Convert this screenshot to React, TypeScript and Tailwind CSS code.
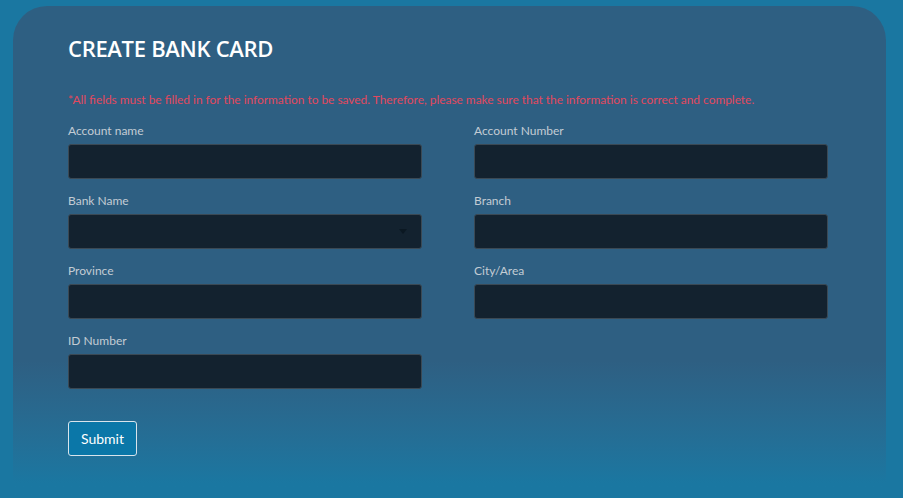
import React from "react";

type Field = { label: string; select?: boolean };

const rows: Field[][] = [
  [{ label: "Account name" }, { label: "Account Number" }],
  [{ label: "Bank Name", select: true }, { label: "Branch" }],
  [{ label: "Province" }, { label: "City/Area" }],
  [{ label: "ID Number" }],
];

function FormField({ label, select }: Field) {
  return (
    <label className="flex flex-col">
      <span className="text-[12px] leading-[15px] text-[#c3ccd4]">{label}</span>
      {select ? (
        <div className="relative mt-[6px]">
          <select className="h-[35px] w-full appearance-none rounded-[3px] border border-[#3b4954] bg-[#13222f] px-3 text-[13px] text-white outline-none">
            <option value=""></option>
          </select>
          <span className="pointer-events-none absolute right-[15px] top-[15px] h-0 w-0 border-x-[4px] border-t-[5px] border-x-transparent border-t-[#0b1822]" />
        </div>
      ) : (
        <input
          type="text"
          className="mt-[6px] h-[35px] w-full rounded-[3px] border border-[#3b4954] bg-[#13222f] px-3 text-[13px] text-white outline-none"
        />
      )}
    </label>
  );
}

export default function App() {
  return (
    <div className="min-h-screen bg-[#1a77a1] pl-[13px] pr-[17px] pt-[6px] font-['Open_Sans','Liberation_Sans',sans-serif]">
      <div className="min-h-[492px] rounded-t-[34px] bg-linear-to-b from-[#2e5f82] via-[#2e5f82] via-72% to-[#1a77a1] to-97% pl-[55px] pr-[58px] pt-[28px] pb-[36px]">
        <h1 className="text-[22px] font-semibold leading-[28px] tracking-[-0.3px] text-white">
          CREATE BANK CARD
        </h1>
        <p className="mt-[30px] font-['Lato','Open_Sans',sans-serif] text-[11.9px] leading-[15px] text-[#e2485e]">
          *All fields must be filled in for the information to be saved. Therefore, please make sure that the information is correct and complete.
        </p>
        <div className="mt-[16px] flex flex-col gap-[14px] font-['Lato','Open_Sans',sans-serif]">
          {rows.map((row, i) => (
            <div key={i} className="grid grid-cols-2 gap-x-[52px]">
              {row.map((f) => (
                <FormField key={f.label} {...f} />
              ))}
            </div>
          ))}
        </div>
        <button
          type="button"
          className="mt-[32px] h-[35px] w-[69px] rounded-[3px] border border-[#d8e4ec] bg-[#0b77a8] font-['Lato','Open_Sans',sans-serif] text-[14px] text-white"
        >
          Submit
        </button>
      </div>
    </div>
  );
}
